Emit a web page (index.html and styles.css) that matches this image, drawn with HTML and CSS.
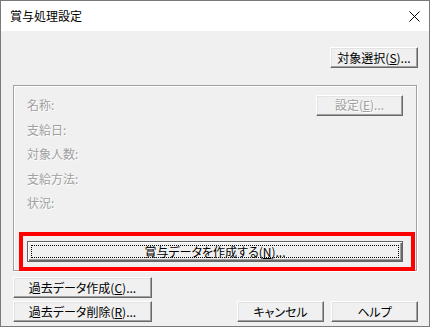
FILE: index.html
```html
<!DOCTYPE html>
<html lang="ja">
<head>
<meta charset="utf-8">
<link rel="stylesheet" href="styles.css">
</head>
<body>
<div class="window">
  <div class="titlebar">
    <span class="title">賞与処理設定</span>
    <svg class="close" width="11" height="11" viewBox="0 0 11 11"><path d="M0.5 0.5 L10.5 10.5 M10.5 0.5 L0.5 10.5" stroke="#000" stroke-width="1" fill="none"/></svg>
  </div>
  <div class="content">
    <div class="toprow">
      <div class="btn w88">対象選択(<u>S</u>)...</div>
    </div>
    <div class="group">
      <div class="row">
        <span class="label">名称:</span>
        <div class="btn w87 disabled">設定(<u>E</u>)...</div>
      </div>
      <div class="row"><span class="label">支給日:</span></div>
      <div class="row"><span class="label">対象人数:</span></div>
      <div class="row"><span class="label">支給方法:</span></div>
      <div class="row"><span class="label">状況:</span></div>
      <div class="btn default">
        <div class="focus">賞与データを作成する(<u>N</u>)...</div>
      </div>
    </div>
    <div class="bottom">
      <div class="leftcol">
        <div class="btn w139">過去データ作成(<u>C</u>)...</div>
        <div class="btn w139">過去データ削除(<u>R</u>)...</div>
      </div>
      <div class="rightbtns">
        <div class="btn w87">キャンセル</div>
        <div class="btn w87">ヘルプ</div>
      </div>
    </div>
  </div>
  <div class="highlight"></div>
</div>
</body>
</html>
```
FILE: styles.css
```css
* { box-sizing: border-box; }
html, body { margin: 0; padding: 0; background: #f0f0f0; }
body {
  font-family: "Noto Sans CJK JP", "Noto Sans", sans-serif;
  font-size: 12px;
  font-feature-settings: "palt";
  color: #000;
}
.window {
  position: relative;
  width: 430px;
  height: 327px;
  border: 1px solid #7a7a7a;
  background: #f0f0f0;
  display: flex;
  flex-direction: column;
}
.titlebar {
  height: 30px;
  background: #fff;
  display: flex;
  align-items: center;
  padding-left: 9px;
  padding-right: 9px;
}
.title { font-size: 12px; line-height: 1; }
.close { margin-left: auto; }
.content {
  flex: 1;
  padding: 16px 11px 4px 12px;
  display: flex;
  flex-direction: column;
}
.toprow { display: flex; justify-content: flex-end; }
.btn {
  height: 21px;
  display: flex;
  align-items: center;
  justify-content: center;
  line-height: 1;
  background: #f0f0f0;
  border: 1px solid;
  border-color: #fff #696969 #696969 #fff;
  box-shadow: inset -1px -1px 0 #a0a0a0, inset 1px 1px 0 #e3e3e3;
  white-space: nowrap;
}
.w87 { width: 87px; }
.w88 { width: 88px; }
.w139 { width: 139px; }
.disabled { color: #a0a0a0; text-shadow: 1px 1px 0 #fff; }
.group {
  margin-top: 17px;
  margin-right: 1px;
  height: 186px;
  border: 1px solid #a0a0a0;
  box-shadow: inset 1px 1px 0 #fff, 1px 1px 0 #fff;
  padding: 7px 13px 8px 13px;
  display: flex;
  flex-direction: column;
}
.row {
  height: 24.5px;
  display: flex;
  align-items: center;
  justify-content: space-between;
}
.label { color: #a0a0a0; text-shadow: 1px 1px 0 #fff; line-height: 1; }
.default {
  margin-top: auto;
  padding: 3px;
  border: 1px solid #646464;
  box-shadow: inset 1px 1px 0 #fff, inset -1px -1px 0 #696969, inset -2px -2px 0 #a0a0a0;
  align-items: stretch;
}
.focus {
  flex: 1;
  border: 1px dotted #000;
  display: flex;
  align-items: center;
  justify-content: center;
}
.bottom {
  margin-top: 6px;
  display: flex;
  justify-content: space-between;
  align-items: flex-end;
}
.leftcol { display: flex; flex-direction: column; gap: 3px; }
.rightbtns { display: flex; gap: 7px; }
.highlight {
  position: absolute;
  left: 18px;
  top: 231px;
  width: 396px;
  height: 39px;
  border: 4px solid #ff0000;
}
```
